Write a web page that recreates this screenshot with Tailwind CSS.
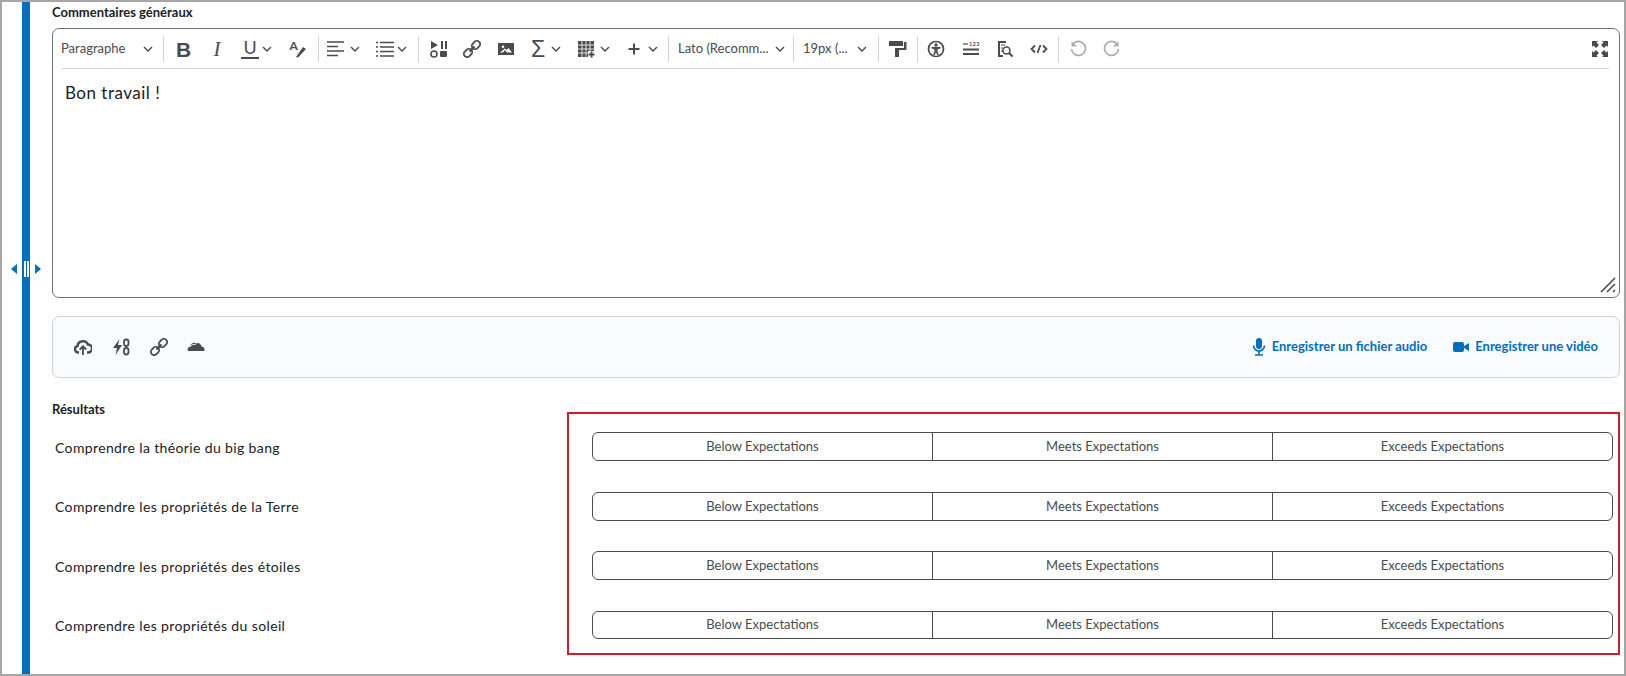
<!DOCTYPE html>
<html lang="fr">
<head>
    <meta charset="UTF-8">
    <meta name="viewport" content="width=device-width, initial-scale=1.0">
    <title>Commentaires généraux</title>
    <script src="https://cdn.jsdelivr.net/npm/@tailwindcss/browser@4"></script>
</head>
<body class="bg-white [font-family:Lato,'Liberation_Sans',sans-serif]">
    <svg class="hidden">
        <symbol id="chev" viewBox="0 0 10 6"><path d="M1 1l4 4 4-4" fill="none" stroke="#494c4e" stroke-width="1.400"/></symbol>
        <symbol id="chain" viewBox="0 0 18 18"><g fill="none" stroke="#494c4e" stroke-width="1.800"><rect x="0.500" y="9.700" width="9" height="6.600" rx="3.300" transform="rotate(-45 5 13)"/><rect x="8.500" y="1.700" width="9" height="6.600" rx="3.300" transform="rotate(-45 13 5)"/><path d="M6.500 11.500l5-5" stroke-width="2.200"/></g></symbol>
    </svg>

    <div class="relative flex w-[1626px] h-[676px] border-2 border-[#a6a6a6] overflow-hidden">
        <!-- splitter -->
        <div class="w-[20px] shrink-0"></div>
        <div class="w-[8px] shrink-0 bg-[#006fbf]"></div>
        <div class="absolute left-[9px] top-[259px] flex items-center h-[16px]">
            <svg class="w-[6px] h-[10px] mr-[7px]" viewBox="0 0 6 10"><path d="M6 0v10L0 5z" fill="#006fbf"/></svg>
            <div class="w-[1.5px] h-[16px] bg-white mr-[1.5px]"></div>
            <div class="w-[1.5px] h-[16px] bg-white mr-[6.5px]"></div>
            <svg class="w-[6px] h-[10px]" viewBox="0 0 6 10"><path d="M0 0v10l6-5z" fill="#006fbf"/></svg>
        </div>

        <main class="flex-1 pl-[22px] pr-[4px]">
            <div class="h-[26px] text-[13px] font-bold leading-[20px] text-[#202122]">Commentaires généraux</div>

            <!-- editor -->
            <div class="flex flex-col h-[270px] border border-[#6e7376] rounded-[7px]">
                <div class="flex items-center h-[39px] pt-[1px] text-[13px] text-[#494c4e]">
                    <div class="flex items-center w-[107px] pl-[8px]">
                        <span class="w-[79px]">Paragraphe</span>
                        <svg class="w-[10px] h-[6px] ml-[3px]"><use href="#chev"/></svg>
                    </div>
                    <div class="w-px h-[26px] mx-[3px] bg-[#cdd5dc]"></div>

                    <div class="flex justify-center w-[33px] text-[21px] leading-none font-bold [font-family:'Liberation_Sans',sans-serif]">B</div>
                    <div class="flex justify-center w-[34px] text-[21px] leading-none italic [font-family:'Liberation_Serif',serif]">I</div>
                    <div class="flex items-center w-[46px] pl-[7px] gap-[3px]">
                        <div class="flex flex-col items-center w-[18px] h-[20px] border-b-2 border-[#494c4e] text-[18px] leading-[17px]">U</div>
                        <svg class="w-[10px] h-[6px]"><use href="#chev"/></svg>
                    </div>
                    <div class="flex justify-center w-[35px]">
                        <div class="relative w-[18px] h-[18px]">
                            <span class="absolute left-[1px] top-0 text-[12px] leading-[12px] font-bold">A</span>
                            <svg class="w-[18px] h-[18px]" viewBox="0 0 18 18"><path d="M7 17l7-10 3 2-8 8.500z" fill="#494c4e"/></svg>
                        </div>
                    </div>
                    <div class="w-px h-[26px] mx-[3px] bg-[#cdd5dc]"></div>

                    <div class="flex items-center w-[46px] pl-[5px] gap-[5px]">
                        <svg class="w-[18px] h-[18px]" viewBox="0 0 18 18"><path d="M0 2h17M0 6.500h11M0 11h17M0 15.500h11" stroke="#494c4e" stroke-width="1.600"/></svg>
                        <svg class="w-[10px] h-[6px]"><use href="#chev"/></svg>
                    </div>
                    <div class="flex items-center w-[47px] pl-[8px] gap-[3px]">
                        <svg class="w-[18px] h-[18px]" viewBox="0 0 18 18"><path d="M4 2.500h14M4 7h14M4 11.500h14M4 16h14" stroke="#494c4e" stroke-width="1.400"/><path d="M0 2.500h2M0 7h2M0 11.500h2M0 16h2" stroke="#494c4e" stroke-width="1.600"/></svg>
                        <svg class="w-[10px] h-[6px]"><use href="#chev"/></svg>
                    </div>
                    <div class="w-px h-[26px] mx-[3px] bg-[#cdd5dc]"></div>

                    <div class="flex justify-center w-[33px]">
                        <svg class="w-[18px] h-[18px]" viewBox="0 0 18 18"><path d="M1 1l7 4-7 4z" fill="#494c4e"/><path d="M11 1h2v8h-2zM15 1h2v8h-2z" fill="#494c4e"/><circle cx="4" cy="14" r="3" fill="none" stroke="#494c4e" stroke-width="1.600"/><rect x="10" y="11" width="7" height="6" rx="1" fill="#494c4e"/></svg>
                    </div>
                    <div class="flex justify-center w-[34px]">
                        <svg class="w-[18px] h-[18px]"><use href="#chain"/></svg>
                    </div>
                    <div class="flex justify-center w-[34px]">
                        <svg class="w-[18px] h-[18px]" viewBox="0 0 18 18"><path fill-rule="evenodd" d="M1 3h16v12H1zM3 12.500h3l2-2.500 2 2.500h5l-3.500-4.500-2 2-1.500-1.500zM6 5.500a1.300 1.300 0 100 2.600 1.300 1.300 0 000-2.600z" fill="#494c4e"/></svg>
                    </div>
                    <div class="flex items-center w-[46px] pl-[6px] gap-[4px]">
                        <div class="w-[18px] text-center text-[23px] leading-none [font-family:'Liberation_Sans',sans-serif]">Σ</div>
                        <svg class="w-[10px] h-[6px]"><use href="#chev"/></svg>
                    </div>
                    <div class="flex items-center w-[47px] pl-[8px] gap-[5px]">
                        <svg class="w-[18px] h-[18px]" viewBox="0 0 18 18"><path d="M1 1h16v10h-6v6H1z" fill="#494c4e"/><path d="M5 1v16M9 1v16M13 1v10M1 5h16M1 9h16M1 13h10" stroke="#fff" stroke-width=".8"/><path d="M14.500 11.500v6M11.500 14.500h6" stroke="#494c4e" stroke-width="2"/></svg>
                        <svg class="w-[10px] h-[6px]"><use href="#chev"/></svg>
                    </div>
                    <div class="flex items-center w-[49px] pl-[9px] gap-[5px]">
                        <svg class="w-[18px] h-[18px]" viewBox="0 0 18 18"><path d="M9 3.500v11M3.500 9h11" stroke="#494c4e" stroke-width="2"/></svg>
                        <svg class="w-[10px] h-[6px]"><use href="#chev"/></svg>
                    </div>
                    <div class="w-px h-[26px] mx-[3px] bg-[#cdd5dc]"></div>

                    <div class="flex items-center w-[118px] pl-[6px]">
                        <span class="w-[95px] whitespace-nowrap">Lato (Recomm...</span>
                        <svg class="w-[10px] h-[6px] ml-[2px]"><use href="#chev"/></svg>
                    </div>
                    <div class="w-px h-[26px] mx-[3px] bg-[#cdd5dc]"></div>
                    <div class="flex items-center w-[78px] pl-[6px]">
                        <span class="w-[54px] whitespace-nowrap">19px (...</span>
                        <svg class="w-[10px] h-[6px]"><use href="#chev"/></svg>
                    </div>
                    <div class="w-px h-[26px] mx-[3px] bg-[#cdd5dc]"></div>

                    <div class="flex justify-center w-[32px]">
                        <svg class="w-[18px] h-[18px]" viewBox="0 0 18 18"><path d="M0 1h14v5H0zM15 2h2.500v8H10v7H6V8h9z" fill="#494c4e"/></svg>
                    </div>
                    <div class="w-px h-[26px] ml-[3px] mr-px bg-[#cdd5dc]"></div>

                    <div class="flex justify-center w-[34px]">
                        <svg class="w-[18px] h-[18px]" viewBox="0 0 18 18"><circle cx="9" cy="9" r="7.500" fill="none" stroke="#494c4e" stroke-width="1.700"/><circle cx="9" cy="5" r="1.700" fill="#494c4e"/><path d="M4.500 7h9v1.500l-3 .8v2.200l1.500 3.400h-1.600L9 12.500l-1.400 2.400H6l1.500-3.400V9.300l-3-.8z" fill="#494c4e"/></svg>
                    </div>
                    <div class="flex justify-center w-[35px]">
                        <svg class="w-[18px] h-[18px]" viewBox="0 0 18 18"><path d="M1 4h5" stroke="#494c4e" stroke-width="1.200"/><text x="7" y="6" font-size="5.500" font-weight="700" font-family="Lato" letter-spacing=".4" fill="#494c4e">123</text><path d="M1 9.500h16M1 14h16" stroke="#494c4e" stroke-width="2"/></svg>
                    </div>
                    <div class="flex justify-center w-[34px]">
                        <svg class="w-[18px] h-[18px]" viewBox="0 0 18 18"><path d="M2 1h8v2H4v12h3v2H2z" fill="#494c4e"/><path d="M5 5h4M5 8h2M5 11h2" stroke="#494c4e" stroke-width="1.200"/><circle cx="10.500" cy="10.500" r="3.500" fill="none" stroke="#494c4e" stroke-width="1.600"/><path d="M13 13l3.500 3.500" stroke="#494c4e" stroke-width="2"/></svg>
                    </div>
                    <div class="flex justify-center w-[34px]">
                        <svg class="w-[18px] h-[18px]" viewBox="0 0 18 18" fill="none" stroke="#494c4e" stroke-width="1.800"><path d="M5 5.500L1.500 9 5 12.500M13 5.500L16.500 9 13 12.500M10.500 5l-3 8"/></svg>
                    </div>
                    <div class="w-px h-[26px] ml-[2px] mr-[2px] bg-[#cdd5dc]"></div>

                    <div class="flex justify-center w-[34px]">
                        <svg class="w-[18px] h-[18px]" viewBox="0 0 18 18"><path d="M4.500 3.500A7 7 0 112.500 9" fill="none" stroke="#a9adb0" stroke-width="1.700"/><path d="M2.500 1v5.500H8z" fill="#a9adb0"/></svg>
                    </div>
                    <div class="flex justify-center w-[34px]">
                        <svg class="w-[18px] h-[18px]" viewBox="0 0 18 18"><path d="M13.500 3.500A7 7 0 1015.500 9" fill="none" stroke="#a9adb0" stroke-width="1.700"/><path d="M15.500 1v5.500H10z" fill="#a9adb0"/></svg>
                    </div>

                    <div class="flex justify-center w-[34px] ml-auto mr-[2px]">
                        <svg class="w-[18px] h-[18px]" viewBox="0 0 18 18"><path d="M1 1h6L5.500 2.500 8 5 5 8 2.500 5.500 1 7zM17 1v6l-1.500-1.500L13 8l-3-3 2.500-2.500L11 1zM1 17v-6l1.500 1.500L5 10l3 3-2.500 2.500L7 17zM17 17h-6l1.500-1.500L10 13l3-3 2.500 2.500L17 11z" fill="#494c4e"/></svg>
                    </div>
                </div>
                <div class="h-px ml-[9px] mr-[10px] bg-[#cdd5dc]"></div>
                <div class="flex-1 pl-[12px] pt-[10px] text-[17px] leading-[28px] tracking-[.5px] text-[#202122]">Bon travail !</div>
                <div class="flex justify-end pr-[3px] pb-[4px]">
                    <svg class="w-[16px] h-[16px]" viewBox="0 0 16 16" fill="none" stroke="#494c4e" stroke-width="1.600"><path d="M1 15L15 1M7 15l8-8M13 15l2-2"/></svg>
                </div>
            </div>

            <!-- attachments -->
            <div class="flex items-center h-[62px] mt-[18px] pl-[21px] pr-[21px] bg-[#f9fbff] border border-[#cdd5dc] rounded-[7px]">
                <div class="flex items-center gap-[20px]">
                    <svg class="w-[18px] h-[18px]" viewBox="0 0 18 18"><path d="M5 14.500H4a3.300 3.300 0 01-.5-6.500A5.500 5.500 0 0114 6.500a4 4 0 010 8h-1" fill="none" stroke="#494c4e" stroke-width="2.400"/><path d="M9 17V9M5.800 11.500L9 8.300l3.200 3.200" fill="none" stroke="#494c4e" stroke-width="1.800"/></svg>
                    <svg class="w-[18px] h-[18px]" viewBox="0 0 18 18"><path d="M7.500 1L1 10h4l-1.500 7L10 7H6z" fill="#494c4e"/><rect x="12" y="1.500" width="4.500" height="6.500" rx="2.200" fill="none" stroke="#494c4e" stroke-width="1.800"/><rect x="12" y="10" width="4.500" height="6.500" rx="2.200" fill="none" stroke="#494c4e" stroke-width="1.800"/></svg>
                    <svg class="w-[18px] h-[18px]"><use href="#chain"/></svg>
                    <svg class="w-[18px] h-[18px] -ml-[1px]" viewBox="0 0 18 18"><path d="M1 13c-1-2 0-4 2-4.500C4 5 7 4 9 5.500c2-1.500 5 0 5.500 3 2 0 3.500 2 3 4.500z" fill="#494c4e"/><path d="M3 9c1-2 3-3 5.500-2.500" stroke="#f9fbff" stroke-width="1" fill="none"/></svg>
                </div>
                <div class="flex items-center ml-auto text-[13px] font-bold text-[#006fbf]">
                    <svg class="w-[14px] h-[18px] mr-[6px]" viewBox="0 0 14 18"><rect x="4" y="0" width="6" height="11" rx="3" fill="#006fbf"/><path d="M1.500 7.500a5.500 5.500 0 0011 0M7 13v3.500M3 17h8" fill="none" stroke="#006fbf" stroke-width="1.600"/></svg>
                    <span>Enregistrer un fichier audio</span>
                    <svg class="w-[16px] h-[10px] ml-[26px] mr-[6px]" viewBox="0 0 16 10"><rect x="0" y="0" width="11" height="10" rx="2" fill="#006fbf"/><path d="M11 4l5-3v8l-5-3z" fill="#006fbf"/></svg>
                    <span>Enregistrer une vidéo</span>
                </div>
            </div>

            <!-- outcomes -->
            <div class="flex mt-[21px]">
                <div class="w-[515px] shrink-0 text-[14px] tracking-[.37px] text-[#202122]">
                    <div class="h-[20px] text-[13px] font-bold leading-[20px] tracking-normal">Résultats</div>
                    <div class="pl-[3px] h-[24px] mt-[17px] leading-[24px]">Comprendre la théorie du big bang</div>
                    <div class="pl-[3px] h-[24px] mt-[35px] leading-[24px]">Comprendre les propriétés de la Terre</div>
                    <div class="pl-[3px] h-[24px] mt-[36px] leading-[24px]">Comprendre les propriétés des étoiles</div>
                    <div class="pl-[3px] h-[24px] mt-[35px] leading-[24px]">Comprendre les propriétés du soleil</div>
                </div>
                <div class="w-[1053px] h-[243px] mt-[13px] pt-[18px] pl-[23px] pr-[5px] border-2 border-[#cc1f2d] text-[13px] text-[#494c4e]">
                    <div class="grid grid-cols-[339px_340px_1fr] h-[29px] border border-[#494c4e] rounded-[6px]">
                        <div class="flex items-center justify-center">Below Expectations</div>
                        <div class="flex items-center justify-center border-l border-[#494c4e]">Meets Expectations</div>
                        <div class="flex items-center justify-center border-l border-[#494c4e]">Exceeds Expectations</div>
                    </div>
                    <div class="grid grid-cols-[339px_340px_1fr] h-[29px] mt-[31px] border border-[#494c4e] rounded-[6px]">
                        <div class="flex items-center justify-center">Below Expectations</div>
                        <div class="flex items-center justify-center border-l border-[#494c4e]">Meets Expectations</div>
                        <div class="flex items-center justify-center border-l border-[#494c4e]">Exceeds Expectations</div>
                    </div>
                    <div class="grid grid-cols-[339px_340px_1fr] h-[29px] mt-[30px] border border-[#494c4e] rounded-[6px]">
                        <div class="flex items-center justify-center">Below Expectations</div>
                        <div class="flex items-center justify-center border-l border-[#494c4e]">Meets Expectations</div>
                        <div class="flex items-center justify-center border-l border-[#494c4e]">Exceeds Expectations</div>
                    </div>
                    <div class="grid grid-cols-[339px_340px_1fr] h-[28px] mt-[31px] border border-[#494c4e] rounded-[6px]">
                        <div class="flex items-center justify-center">Below Expectations</div>
                        <div class="flex items-center justify-center border-l border-[#494c4e]">Meets Expectations</div>
                        <div class="flex items-center justify-center border-l border-[#494c4e]">Exceeds Expectations</div>
                    </div>
                </div>
            </div>
        </main>
    </div>
</body>
</html>
